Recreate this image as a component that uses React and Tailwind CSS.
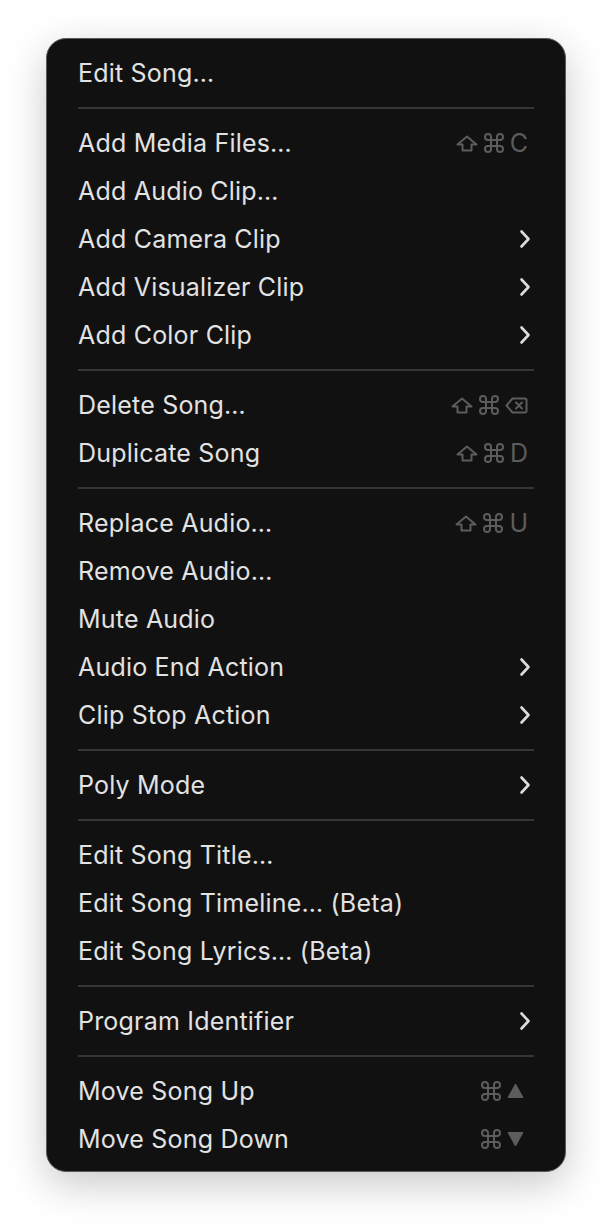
import React from "react";

const SHORTCUT = "#5c5c5c";

function ShiftIcon() {
  return (
    <svg width="22" height="17" viewBox="0 0 22 17" fill="none">
      <path d="M11 1.5 L20.5 9.5 H15.5 V15.5 H6.5 V9.5 H1.5 Z" stroke={SHORTCUT} strokeWidth="2" strokeLinejoin="round" />
    </svg>
  );
}

function CmdIcon() {
  return (
    <svg width="20" height="20" viewBox="0 0 20 20" fill="none">
      <path
        d="M7 7 V4 A3 3 0 1 0 4 7 H16 A3 3 0 1 0 13 4 V16 A3 3 0 1 0 16 13 H4 A3 3 0 1 0 7 16 Z"
        stroke={SHORTCUT}
        strokeWidth="2"
        strokeLinejoin="round"
      />
    </svg>
  );
}

function DeleteIcon() {
  return (
    <svg width="23" height="17" viewBox="0 0 23 17" fill="none">
      <path d="M7.5 1.5 H20 A1.5 1.5 0 0 1 21.5 3 V14 A1.5 1.5 0 0 1 20 15.5 H7.5 L1.5 8.5 Z" stroke={SHORTCUT} strokeWidth="2" strokeLinejoin="round" />
      <path d="M11 5.5 L17 11.5 M17 5.5 L11 11.5" stroke={SHORTCUT} strokeWidth="2" strokeLinecap="round" />
    </svg>
  );
}

function Triangle({ down }) {
  return (
    <svg width="17" height="16" viewBox="0 0 17 16">
      {down ? (
        <path d="M1 1.5 H16 L8.5 15 Z" fill={SHORTCUT} stroke={SHORTCUT} strokeWidth="1" strokeLinejoin="round" />
      ) : (
        <path d="M8.5 1 L16 14.5 H1 Z" fill={SHORTCUT} stroke={SHORTCUT} strokeWidth="1" strokeLinejoin="round" />
      )}
    </svg>
  );
}

function Chevron() {
  return (
    <svg width="12" height="20" viewBox="0 0 12 20" fill="none">
      <path d="M2.5 2.5 L9.5 10 L2.5 17.5" stroke="#dcdcdc" strokeWidth="2.6" strokeLinecap="round" strokeLinejoin="round" />
    </svg>
  );
}

function Letter({ children }) {
  return <span className="text-[25px] leading-none text-[#5c5c5c]">{children}</span>;
}

function Shortcut({ keyName }) {
  if (keyName === "up" || keyName === "down") {
    return (
      <div className="mr-[10px] flex items-center gap-[6px]">
        <CmdIcon />
        <Triangle down={keyName === "down"} />
      </div>
    );
  }
  return (
    <div className="mr-[6px] flex items-center gap-[6px]">
      <ShiftIcon />
      <CmdIcon />
      {keyName === "del" ? <DeleteIcon /> : <Letter>{keyName}</Letter>}
    </div>
  );
}

const groups = [
  [{ label: "Edit Song…" }],
  [
    { label: "Add Media Files…", key: "C" },
    { label: "Add Audio Clip…" },
    { label: "Add Camera Clip", sub: true },
    { label: "Add Visualizer Clip", sub: true },
    { label: "Add Color Clip", sub: true },
  ],
  [
    { label: "Delete Song…", key: "del" },
    { label: "Duplicate Song", key: "D" },
  ],
  [
    { label: "Replace Audio…", key: "U" },
    { label: "Remove Audio…" },
    { label: "Mute Audio" },
    { label: "Audio End Action", sub: true },
    { label: "Clip Stop Action", sub: true },
  ],
  [{ label: "Poly Mode", sub: true }],
  [
    { label: "Edit Song Title…" },
    { label: "Edit Song Timeline… (Beta)" },
    { label: "Edit Song Lyrics… (Beta)" },
  ],
  [{ label: "Program Identifier", sub: true }],
  [
    { label: "Move Song Up", key: "up" },
    { label: "Move Song Down", key: "down" },
  ],
];

export default function App() {
  return (
    <div className="min-h-[1226px] w-[612px] bg-white pt-[38px] pl-[46px]" style={{ fontFamily: "Inter, 'Noto Sans', sans-serif" }}>
      <div className="w-[520px] rounded-[20px] border border-[#5a5a5a] bg-[#111111] px-[31px] pt-[10px] pb-[8px] shadow-[0_12px_40px_rgba(0,0,0,0.22)]">
        {groups.map((items, gi) => (
          <div key={gi}>
            {gi > 0 && <div className="my-[10px] h-[2px] bg-[#363636]" />}
            {items.map((it) => (
              <div key={it.label} className="flex h-12 items-center justify-between">
                <span className="text-[25px] leading-none tracking-[0.2px] text-[#e2e2e2]">{it.label}</span>
                {it.sub && (
                  <div className="mr-[3px] flex items-center">
                    <Chevron />
                  </div>
                )}
                {it.key && <Shortcut keyName={it.key} />}
              </div>
            ))}
          </div>
        ))}
      </div>
    </div>
  );
}
